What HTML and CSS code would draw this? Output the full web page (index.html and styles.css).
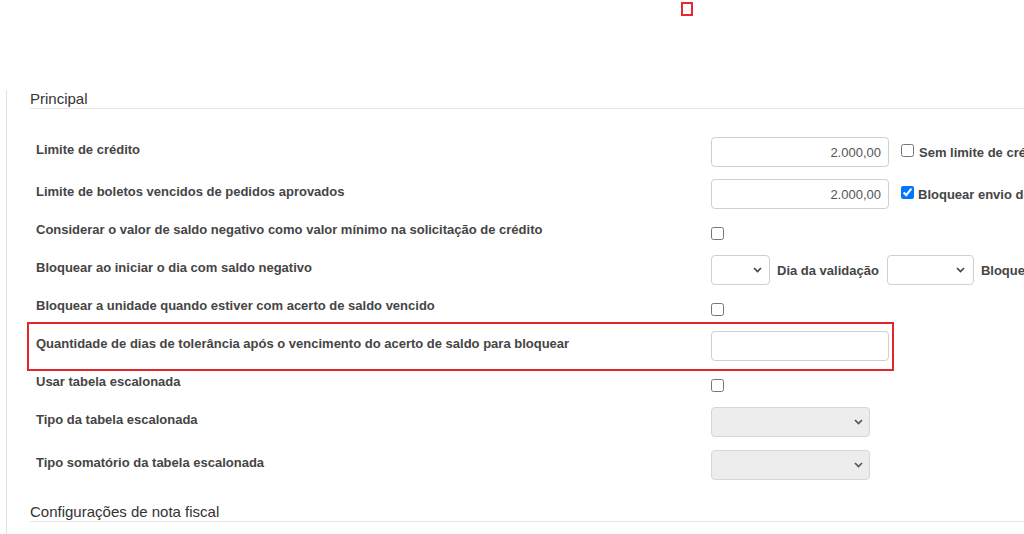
FILE: index.html
```html
<!DOCTYPE html>
<html lang="pt-BR">
<head>
<meta charset="utf-8">
<title>Configurações</title>
<link rel="stylesheet" href="styles.css">
</head>
<body>
<div class="topbar"><div class="marker"></div></div>
<div class="section">
  <h2 class="section-title">Principal</h2>
  <div class="form">
    <div class="row">
      <span class="label">Limite de crédito</span>
      <div class="controls">
        <input class="text-input" type="text" value="2.000,00">
        <label class="check-label"><input type="checkbox" class="checkbox">Sem limite de crédito</label>
      </div>
    </div>
    <div class="row row--gap4">
      <span class="label">Limite de boletos vencidos de pedidos aprovados</span>
      <div class="controls">
        <input class="text-input" type="text" value="2.000,00">
        <label class="check-label check-label--tight"><input type="checkbox" class="checkbox" checked>Bloquear envio de boletos</label>
      </div>
    </div>
    <div class="row">
      <span class="label">Considerar o valor de saldo negativo como valor mínimo na solicitação de crédito</span>
      <div class="controls"><input type="checkbox" class="checkbox checkbox--row"></div>
    </div>
    <div class="row">
      <span class="label">Bloquear ao iniciar o dia com saldo negativo</span>
      <div class="controls controls--inline">
        <div class="select select--xs"><svg class="chevron" width="9" height="6" viewBox="0 0 9 6"><path d="M1 1l3.5 3.5L8 1" fill="none" stroke="#444" stroke-width="1.7"/></svg></div>
        <span class="inline-label">Dia da validação</span>
        <div class="select select--sm"><svg class="chevron" width="9" height="6" viewBox="0 0 9 6"><path d="M1 1l3.5 3.5L8 1" fill="none" stroke="#444" stroke-width="1.7"/></svg></div>
        <span class="inline-label">Bloquear após</span>
      </div>
    </div>
    <div class="row">
      <span class="label">Bloquear a unidade quando estiver com acerto de saldo vencido</span>
      <div class="controls"><input type="checkbox" class="checkbox checkbox--row"></div>
    </div>
    <div class="row row--highlighted">
      <span class="highlight"></span>
      <span class="label">Quantidade de dias de tolerância após o vencimento do acerto de saldo para bloquear</span>
      <div class="controls"><input class="text-input" type="text" value=""></div>
    </div>
    <div class="row">
      <span class="label">Usar tabela escalonada</span>
      <div class="controls"><input type="checkbox" class="checkbox checkbox--row"></div>
    </div>
    <div class="row">
      <span class="label">Tipo da tabela escalonada</span>
      <div class="controls">
        <div class="select select--md select--disabled"><svg class="chevron" width="9" height="6" viewBox="0 0 9 6"><path d="M1 1l3.5 3.5L8 1" fill="none" stroke="#555" stroke-width="1.7"/></svg></div>
      </div>
    </div>
    <div class="row row--gap5">
      <span class="label">Tipo somatório da tabela escalonada</span>
      <div class="controls">
        <div class="select select--md select--disabled"><svg class="chevron" width="9" height="6" viewBox="0 0 9 6"><path d="M1 1l3.5 3.5L8 1" fill="none" stroke="#555" stroke-width="1.7"/></svg></div>
      </div>
    </div>
  </div>
  <h2 class="section-title section-title--next">Configurações de nota fiscal</h2>
</div>
</body>
</html>
```

FILE: styles.css
```css
html, body {
  margin: 0;
  padding: 0;
  overflow: hidden;
  background: #fff;
}

body {
  width: 1024px;
  height: 534px;
  font-family: "Liberation Sans", Arial, sans-serif;
  color: #444;
}

.topbar {
  height: 90px;
  padding-top: 2px;
  box-sizing: border-box;
}

.marker {
  margin-left: 681px;
  width: 12px;
  height: 14px;
  box-sizing: border-box;
  border: 2px solid #e8262b;
}

.section {
  margin-left: 6px;
  border-left: 1px solid #e2e2e2;
  padding-left: 23px;
  padding-bottom: 12px;
  overflow: hidden;
}

.section-title {
  margin: 0;
  font-size: 15px;
  line-height: 18px;
  font-weight: normal;
  color: #333;
  border-bottom: 1px solid #e6e6e6;
  white-space: nowrap;
}

.section-title--next {
  margin-top: 19px;
}

.form {
  margin-top: 24px;
}

.row {
  display: grid;
  grid-template-columns: 675px auto;
  align-items: center;
  height: 38px;
  padding-left: 6px;
  position: relative;
}

.row--gap4 { margin-top: 4px; }
.row--gap5 { margin-top: 5px; }

.label {
  font-size: 13px;
  line-height: 15px;
  font-weight: bold;
  color: #454545;
  white-space: nowrap;
  padding-bottom: 5px;
}

.controls {
  display: flex;
  align-items: center;
  gap: 12px;
  white-space: nowrap;
}

.controls--inline {
  gap: 7px;
}

.text-input {
  width: 178px;
  height: 30px;
  box-sizing: border-box;
  margin: 0;
  border: 1px solid #cfcfcf;
  border-radius: 4px;
  padding: 0 7px;
  font-family: "Liberation Sans", Arial, sans-serif;
  font-size: 13px;
  color: #555;
  text-align: right;
  background: #fff;
  outline: none;
}

.checkbox {
  width: 13px;
  height: 13px;
  margin: 0;
}

.checkbox--row {
  margin-top: 3px;
}

.check-label {
  display: flex;
  align-items: center;
  gap: 5px;
  font-size: 13px;
  font-weight: bold;
  color: #454545;
}

.check-label .checkbox {
  margin-bottom: 4px;
}

.check-label--tight {
  gap: 4px;
}

.inline-label {
  font-size: 13px;
  font-weight: bold;
  color: #454545;
  margin-right: 1px;
}

.select {
  height: 30px;
  box-sizing: border-box;
  border: 1px solid #d0d0d0;
  border-radius: 4px;
  background: #fff;
  display: flex;
  align-items: center;
  justify-content: flex-end;
  padding-right: 7px;
}

.select--xs { width: 59px; }
.select--sm { width: 87px; padding-right: 8px; }
.select--md { width: 159px; padding-right: 6px; }

.select--disabled {
  background: #ededed;
  border-color: #d6d6d6;
}

.chevron {
  display: block;
}

.highlight {
  position: absolute;
  left: -3px;
  top: -5px;
  width: 867px;
  height: 49px;
  box-sizing: border-box;
  border: 2px solid #e3262b;
  pointer-events: none;
}
```
